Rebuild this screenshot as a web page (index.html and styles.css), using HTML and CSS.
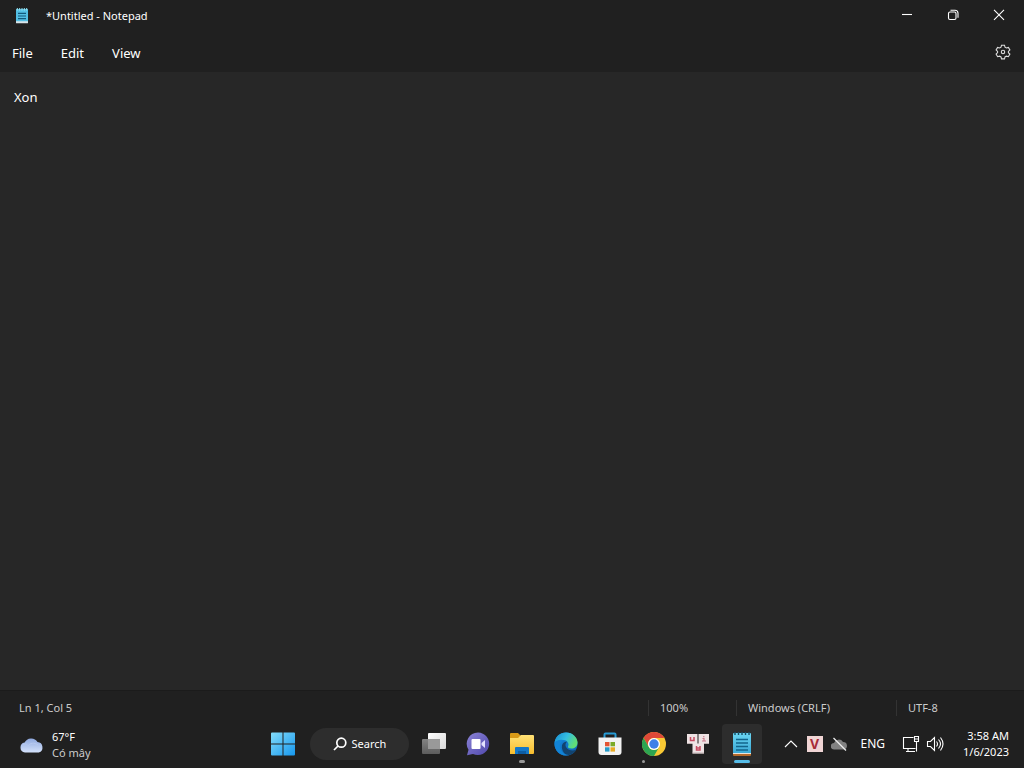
FILE: index.html
```html
<!DOCTYPE html>
<html lang="en">
<head>
	<meta charset="UTF-8">
	<title>*Untitled - Notepad</title>
	<link rel="stylesheet" href="styles.css">
</head>
<body>
	<!-- title bar -->
	<header class="titlebar">
		<svg class="app-icon" width="14" height="16" viewBox="0 0 20 24">
			<rect x="1" y="2" width="18" height="21" rx="1" fill="#d9e4e8"/>
			<rect x="1" y="2" width="18" height="18" rx="1" fill="#53bfe4"/>
			<path d="M3 0v4M6.500 0v4M10 0v4M13.500 0v4M17 0v4" stroke="#8de3f5" stroke-width="1.500"/>
			<path d="M4 8h12M4 12h12M4 16h12" stroke="#125a7c" stroke-width="1.800"/>
		</svg>
		<h1>*Untitled - Notepad</h1>
		<div class="window-buttons">
			<button type="button" aria-label="Minimize">
				<svg width="12" height="12" viewBox="0 0 12 12"><path d="M1 5.500h10"/></svg>
			</button>
			<button type="button" aria-label="Restore">
				<svg width="12" height="12" viewBox="0 0 12 12"><rect x="1.500" y="3" width="7.500" height="7.500" rx="1.500"/><path d="M3.500 1.200h4.500a3 3 0 0 1 3 3v4.500"/></svg>
			</button>
			<button type="button" aria-label="Close">
				<svg width="12" height="12" viewBox="0 0 12 12"><path d="M1 .8l10 10M11 .8l-10 10"/></svg>
			</button>
		</div>
	</header>

	<!-- menu -->
	<nav class="menu">
		<button type="button">File</button>
		<button type="button">Edit</button>
		<button type="button">View</button>
		<button type="button" class="settings" aria-label="Settings">
			<svg width="16" height="16" viewBox="0 0 16 16">
				<path d="M6.500 1.200h3l.5 2 1.400.8 2-.6 1.500 2.600-1.500 1.400v1.300l1.500 1.400-1.500 2.600-2-.6-1.400.8-.5 2h-3l-.5-2-1.400-.8-2 .6L1.100 10l1.500-1.400V7.400L1.100 6l1.500-2.600 2 .6L6 3.200z"/>
				<circle cx="8" cy="8" r="1.700"/>
			</svg>
		</button>
	</nav>

	<textarea class="editor" aria-label="Text editor" spellcheck="false">Xon</textarea>

	<!-- status bar -->
	<footer class="status">
		<span class="position">Ln 1, Col 5</span>
		<span class="zoom">100%</span>
		<span class="line-end">Windows (CRLF)</span>
		<span class="encoding">UTF-8</span>
	</footer>

	<!-- taskbar -->
	<div class="taskbar">
		<button type="button" class="weather">
			<svg width="24" height="16" viewBox="0 0 24 16">
				<defs><linearGradient id="cloud" x2="0" y2="1"><stop stop-color="#8fa9df"/><stop offset="1" stop-color="#d3e1fb"/></linearGradient></defs>
				<path d="M5 15.500a5 5 0 0 1-.4-9.900A7.300 7.300 0 0 1 17.500 5a5.400 5.400 0 0 1 1.300 10.500z" fill="url(#cloud)"/>
				<path d="M3 8c2-2 4-1 5 1 2-3 6-4 10-1" fill="none" stroke="#b7c9f0" stroke-width="1"/>
			</svg>
			<span class="weather-text">
				<span>67°F</span>
				<span class="summary">Có mây</span>
			</span>
		</button>

		<div class="apps">
			<button type="button" class="start" aria-label="Start">
				<svg width="24" height="24" viewBox="0 0 24 24">
					<defs><linearGradient id="win" x2="1" y2="1"><stop stop-color="#83dcfa"/><stop offset="1" stop-color="#1697ee"/></linearGradient></defs>
					<path d="M0 1.500q0-1 1-1h10.500v11H0zM12.500.5H23q1 0 1 1v10H12.500zM0 12.500h11.500v11H1q-1 0-1-1zM12.500 12.500H24v10q0 1-1 1H12.500z" fill="url(#win)"/>
				</svg>
			</button>
			<button type="button" class="search">
				<svg width="14" height="14" viewBox="0 0 14 14"><circle cx="8.300" cy="5.700" r="4.500"/><path d="M5 9L1 13"/></svg>
				Search
			</button>
			<button type="button" aria-label="Task view">
				<svg width="24" height="24" viewBox="0 0 24 24">
					<defs>
						<linearGradient id="pane" x2="1" y2="1"><stop stop-color="#fff"/><stop offset="1" stop-color="#d8d8d8"/></linearGradient>
						<linearGradient id="back" x2="0" y2="1"><stop stop-color="#8b8b8b"/><stop offset="1" stop-color="#626262"/></linearGradient>
					</defs>
					<rect x="6" y="1" width="18" height="16" rx="1" fill="url(#pane)"/>
					<rect y="7" width="18" height="15" rx="1" fill="url(#back)" opacity=".92"/>
					<path d="M6 7h12v10H6z" fill="#999"/>
				</svg>
			</button>
			<button type="button" aria-label="Chat">
				<svg width="24" height="24" viewBox="0 0 24 24">
					<defs><linearGradient id="chat" x2="1" y2="1"><stop stop-color="#8b83d6"/><stop offset="1" stop-color="#5048ac"/></linearGradient></defs>
					<path d="M12 .5a11.300 11.300 0 1 1-5 21.500L1 23.300l1.500-5.500A11.300 11.300 0 0 1 12 .5z" fill="url(#chat)"/>
					<rect x="5.500" y="7" width="9" height="10" rx="1" fill="#fff"/>
					<path d="M15.500 11l3.500-3v8l-3.500-3z" fill="#e3e2ff"/>
				</svg>
			</button>
			<button type="button" class="open" aria-label="File Explorer">
				<svg width="26" height="24" viewBox="0 0 26 24">
					<defs><linearGradient id="folder" x2="0" y2="1"><stop stop-color="#ffe176"/><stop offset="1" stop-color="#f8bd2d"/></linearGradient></defs>
					<path d="M1 2q0-1 1-1h7l3 3-3 3H1z" fill="#d99a17"/>
					<path d="M1 6h8l3-3h12q1 0 1 1v17q0 1-1 1H1z" fill="url(#folder)"/>
					<path d="M6 22v-6q0-1 1-1h12q1 0 1 1v6z" fill="#1478c8"/>
					<path d="M9 22v-3h8v3z" fill="#0d5da4"/>
				</svg>
			</button>
			<button type="button" aria-label="Microsoft Edge">
				<svg width="24" height="24" viewBox="0 0 24 24">
					<defs>
						<linearGradient id="edgetop" x2="1" y2=".4"><stop stop-color="#168bd2"/><stop offset=".55" stop-color="#34bde0"/><stop offset="1" stop-color="#60dd77"/></linearGradient>
						<linearGradient id="edgeleft" x2="1" y2="1"><stop stop-color="#168dde"/><stop offset="1" stop-color="#0b62b7"/></linearGradient>
					</defs>
					<circle cx="12" cy="12" r="11.500" fill="url(#edgeleft)"/>
					<path d="M.6 10.500C1.500 4 6.500.5 12 .5c6.800 0 11.500 5 11.500 10 0 4-3 6-6 6-2.500 0-4-1-3.500-2 1.700-3-1-6.500-4.500-6.500-4 0-7 1-8.900 2.500z" fill="url(#edgetop)"/>
					<path d="M8.500 12c-2 4 1 11.300 6.500 11.100 3.300-.6 6.300-3 7.500-5.600-5.500 2.500-11-.5-11-4.500 0-1.500.7-2.500 1.700-3.200C11 9.400 9.300 10.500 8.500 12z" fill="#12436f"/>
					<path d="M.6 10.500C3 7.500 8 7 11 8.500 6 8.500 4.500 14 7 18c1.500 3 4 5 8 5.100C7 25 .5 19 .5 12z" fill="#1284d7"/>
				</svg>
			</button>
			<button type="button" aria-label="Microsoft Store">
				<svg width="24" height="24" viewBox="0 0 24 24">
					<path d="M6.500 7V2.500q0-1 1-1h9q1 0 1 1V7" fill="none" stroke="#279bd5" stroke-width="2"/>
					<path d="M.5 5.500h23V20q0 3-3 3h-17q-3 0-3-3z" fill="#f2f2f2"/>
					<path d="M7 10h4.500v4.300H7z" fill="#e35432"/><path d="M12.500 10H17v4.300h-4.500z" fill="#7aaa28"/>
					<path d="M7 15.300h4.500v4.300H7z" fill="#259bc9"/><path d="M12.500 15.300H17v4.300h-4.500z" fill="#e9ab24"/>
				</svg>
			</button>
			<button type="button" class="running" aria-label="Google Chrome">
				<svg width="24" height="24" viewBox="0 0 24 24">
					<circle cx="12" cy="12" r="12" fill="#f9c934"/>
					<path d="M1.600 6A12 12 0 0 1 22.400 6H12a6 6 0 0 0-5.200 9z" fill="#de4938"/>
					<path d="M1.600 6A12 12 0 0 0 12 24l5.200-9a6 6 0 0 1-10.400 0z" fill="#2da551"/>
					<circle cx="12" cy="12" r="6" fill="#fff"/><circle cx="12" cy="12" r="4.700" fill="#3e7fe8"/>
				</svg>
			</button>
			<button type="button" aria-label="Keyboard">
				<svg width="24" height="20" viewBox="0 0 24 20">
					<path d="M1 0h10.500v10H1zM12.500 0H23v10H12.500zM6.500 9.500h11.500v10H6.500z" fill="#eee3e4"/>
					<path d="M1 9.500h5.500M18 9.500h5M6.500 19h11.500" stroke="#bfb1b2"/>
					<path d="M4.500 3v3.500h3.500V3M10.500 12v4h3.500v-4M10.500 14h3.500" fill="none" stroke="#c74c62" stroke-width="1.500"/>
					<path d="M17.800 2v1.200M16.500 4.500h1.500V7M16 7h4" fill="none" stroke="#cc7b8c" stroke-width="1.200"/>
				</svg>
			</button>
			<button type="button" class="active" aria-label="Notepad">
				<svg width="20" height="24" viewBox="0 0 20 24">
					<defs><linearGradient id="note" x2="0" y2="1"><stop stop-color="#6ad6f3"/><stop offset="1" stop-color="#3ba9d6"/></linearGradient></defs>
					<path d="M1 19h18v4q0 1-1 1H2q-1 0-1-1z" fill="#b66a2b"/>
					<path d="M1 19h18v3H1z" fill="#e9e4dc"/>
					<path d="M1 2q0-1 1-1h16q1 0 1 1v19H1z" fill="url(#note)"/>
					<path d="M3 0v3M6.500 0v3M10 0v3M13.500 0v3M17 0v3" stroke="#164e68" stroke-width="1.400"/>
					<path d="M4 7.500h12M4 11h12M4 14.500h12M4 18h12" stroke="#12658c" stroke-width="1.600"/>
				</svg>
			</button>
		</div>

		<div class="tray">
			<button type="button" aria-label="Show hidden icons">
				<svg class="line" width="14" height="16" viewBox="0 0 14 16"><path d="M1 11l6-6 6 6"/></svg>
			</button>
			<button type="button" class="ime" aria-label="Vietnamese keyboard">V</button>
			<button type="button" aria-label="OneDrive">
				<svg width="16" height="16" viewBox="0 0 16 16">
					<path d="M3 13.500a3 3 0 0 1 0-6.500 5 5 0 0 1 9-1 3.800 3.800 0 0 1 1 7.500z" fill="#828282"/>
					<path d="M2.500 2l12.500 12.500" stroke="#eee" stroke-width="1.300"/>
				</svg>
			</button>
			<button type="button" class="lang">ENG</button>
			<button type="button" class="network" aria-label="Network and volume">
				<svg class="line" width="18" height="18" viewBox="0 0 18 18"><path d="M11.500 2.500h-10v11h12M4 16.500h9M6 13.500v3M12.500 1.500h4v5h-4zM12.500 4h4M14.500 6.500v10"/></svg>
				<svg class="line" width="18" height="18" viewBox="0 0 18 18"><path d="M1.500 6.500h3l4-4v13l-4-4h-3zM10.500 6.500q2 2.500 0 5M12.500 4.500q4 4.500 0 9M14.500 2.500q5 6.500 0 13"/></svg>
			</button>
			<button type="button" class="clock">
				<span>3:58 AM</span>
				<span>1/6/2023</span>
			</button>
		</div>
	</div>
</body>
</html>
```
FILE: styles.css
```css
*{margin:0;padding:0;box-sizing:border-box;}

body{
	display:flex;
	flex-direction:column;
	min-height:100vh;
	background:#202020;
	color:#fff;
	font:11px/16px "Noto Sans","Open Sans",sans-serif;
}

button{
	border:0;
	background:none;
	color:inherit;
	font:inherit;
}
svg{
	display:block;
	flex:none;
}

/* title bar */
.titlebar{
	display:flex;
	align-items:center;
	height:32px;
	padding:0 2px 0 15px;
}
.titlebar h1{
	margin-left:17px;
	font-size:11px;
	font-weight:400;
}
.window-buttons{
	display:flex;
	margin-left:auto;
	padding-bottom:2px;
}
.window-buttons button{
	display:flex;
	align-items:center;
	justify-content:center;
	width:46px;
	height:28px;
}
.window-buttons svg,
.settings svg,
.search svg,
.line{
	fill:none;
	stroke:#fff;
	stroke-width:1.1;
}

/* menu */
.menu{
	display:flex;
	align-items:center;
	height:40px;
	padding:1px 13px 0 12px;
	gap:28px;
	font-size:13px;
}
.menu .settings{
	margin-left:auto;
	padding-bottom:2px;
}
.settings svg{
	stroke:#ddd;
}

.editor{
	flex:1;
	width:100%;
	padding:15px 14px;
	border:0;
	outline:0;
	resize:none;
	background:#272727;
	color:#fff;
	font:13px/20px "Noto Sans","Open Sans",sans-serif;
}

/* status bar */
.status{
	display:flex;
	align-items:center;
	height:30px;
	padding:4px 0 0 19px;
	border-top:1px solid #1b1b1b;
	color:#ccc;
}
.status .position{
	margin-right:auto;
}
.zoom,.line-end,.encoding{
	padding-left:11px;
	border-left:1px solid #333;
}
.zoom{width:88px;}
.line-end{width:160px;}
.encoding{width:128px;}

/* taskbar */
.taskbar{
	display:grid;
	grid-template-columns:1fr auto 1fr;
	align-items:center;
	height:48px;
}
.weather{
	display:flex;
	align-items:center;
	gap:8px;
	padding:1px 0 0 20px;
	text-align:left;
}
.weather-text span,.clock span{
	display:block;
}
.weather-text .summary{
	color:#ccc;
}

.apps{
	display:flex;
	gap:4px;
}
.apps button{
	position:relative;
	display:flex;
	align-items:center;
	justify-content:center;
	width:40px;
	height:40px;
	border-radius:4px;
}
.apps .start{
	padding-left:2px;
}
.apps .search{
	gap:5px;
	width:99px;
	height:32px;
	margin:4px 1px 4px 4px;
	border-radius:16px;
	background:#2d2d2d;
}
.search svg{
	stroke-width:1.7;
}
.apps .active{
	background:#2d2d2d;
}
/* line under the open apps */
.open::after,.running::after,.active::after{
	content:"";
	position:absolute;
	bottom:1px;
	left:17px;
	width:6px;
	height:3px;
	border-radius:2px;
	background:#999;
}
.running::after{
	left:8px;
	width:3px;
}
.active::after{
	left:12px;
	width:16px;
	background:#56bce8;
}

.tray{
	display:flex;
	align-items:center;
	justify-content:flex-end;
	padding-right:15px;
}
.tray .ime{
	width:16px;
	height:16px;
	margin:0 8px 0 9px;
	background:#f0d5d5;
	color:#a62b39;
	font-size:14px;
	font-weight:700;
}
.tray .lang{
	margin:0 17px 0 14px;
	font-size:12px;
}
.tray .network{
	display:flex;
	gap:6px;
	margin-right:19px;
}
.clock{
	text-align:right;
}
```
